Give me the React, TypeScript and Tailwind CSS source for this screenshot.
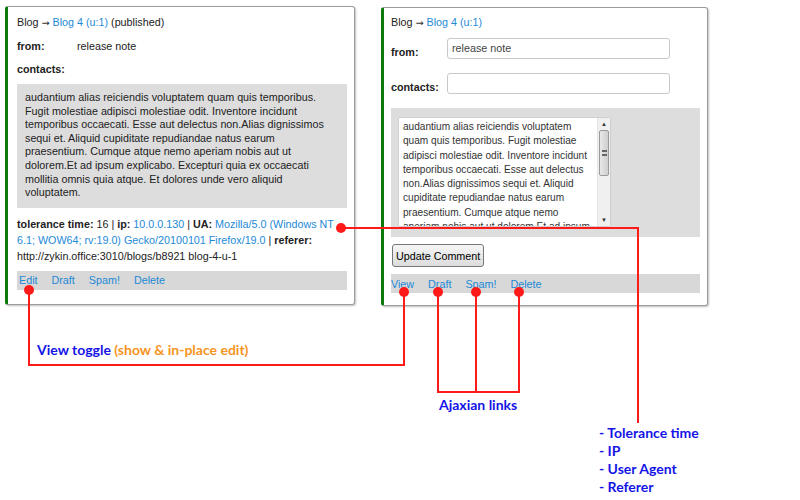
import React from "react";

const body = [
  "audantium alias reiciendis voluptatem quam quis temporibus.",
  "Fugit molestiae adipisci molestiae odit. Inventore incidunt",
  "temporibus occaecati. Esse aut delectus non.Alias dignissimos",
  "sequi et. Aliquid cupiditate repudiandae natus earum",
  "praesentium. Cumque atque nemo aperiam nobis aut ut",
  "dolorem.Et ad ipsum explicabo. Excepturi quia ex occaecati",
  "mollitia omnis quia atque. Et dolores unde vero aliquid",
  "voluptatem.",
];

const areaLines = [
  "audantium alias reiciendis voluptatem",
  "quam quis temporibus. Fugit molestiae",
  "adipisci molestiae odit. Inventore incidunt",
  "temporibus occaecati. Esse aut delectus",
  "non.Alias dignissimos sequi et. Aliquid",
  "cupiditate repudiandae natus earum",
  "praesentium. Cumque atque nemo",
  "aperiam nobis aut ut dolorem.Et ad ipsum",
];

const Link = ({ children }: { children: React.ReactNode }) => (
  <span className="text-[#1d8ad6]">{children}</span>
);

const Arrow = () => (
  <span className="font-['DejaVu_Sans',sans-serif] text-[9.5px] text-[#333]">→</span>
);

const Scrollbar = () => (
  <div className="w-[13px] flex flex-col bg-[#f0f0f0] border-l border-[#e4e4e4]">
    <div className="h-[12px] flex items-center justify-center text-[6px] text-[#333]">▲</div>
    <div className="mx-[1px] h-[46px] rounded-[2px] border border-[#9a9a9a] bg-gradient-to-r from-[#e8e8e8] to-[#cfcfcf] flex items-center justify-center">
      <div className="w-[5px] h-[6px] border-y-[2px] border-double border-[#666]" />
    </div>
    <div className="flex-1" />
    <div className="h-[12px] flex items-center justify-center text-[6px] text-[#333]">▼</div>
  </div>
);

const LinkBar = ({ items, pad }: { items: string[]; pad: string }) => (
  <div className={"h-[19px] bg-[#d8d8d8] flex items-center gap-[14px] " + pad}>
    {items.map((t) => (
      <Link key={t}>{t}</Link>
    ))}
  </div>
);

const ShowCard = () => (
  <div className="w-[350px] h-[299px] bg-white border border-[#9c9c9c] border-l-[3px] border-l-[#0b7a0b] rounded-[3px] shadow-[1px_1px_2px_rgba(0,0,0,0.25)] pl-[9px] pr-[7px] pt-[8px] leading-[14px] text-[#222]">
    <div>
      Blog <Arrow /> <Link>Blog 4 (u:1)</Link> (published)
    </div>
    <div className="flex mt-[9px]">
      <span className="font-bold w-[60px]">from:</span>
      <span>release note</span>
    </div>
    <div className="font-bold mt-[9px]">contacts:</div>
    <div className="mt-[8px] bg-[#dddddd] px-[8px] pt-[7px] pb-[8px] leading-[13.6px] whitespace-nowrap">
      {body.map((l) => (
        <div key={l}>{l}</div>
      ))}
    </div>
    <div className="mt-[8px] leading-[16px] whitespace-nowrap">
      <div>
        <b>tolerance time:</b> 16 | <b>ip:</b> <Link>10.0.0.130</Link> | <b>UA:</b>{" "}
        <Link>Mozilla/5.0 (Windows NT</Link>
      </div>
      <div>
        <Link>6.1; WOW64; rv:19.0) Gecko/20100101 Firefox/19.0</Link> | <b>referer:</b>
      </div>
      <div>http://zykin.office:3010/blogs/b8921 blog-4-u-1</div>
    </div>
    <div className="mt-[7px]">
      <LinkBar items={["Edit", "Draft", "Spam!", "Delete"]} pad="pl-[2px]" />
    </div>
  </div>
);

const EditCard = () => (
  <div className="w-[327px] h-[299px] mt-[1px] bg-white border border-[#9c9c9c] border-l-[3px] border-l-[#0b7a0b] rounded-[3px] shadow-[1px_1px_2px_rgba(0,0,0,0.25)] pl-[7px] pr-[7px] pt-[7px] leading-[14px] text-[#222]">
    <div>
      Blog <Arrow /> <Link>Blog 4 (u:1)</Link>
    </div>
    <div className="flex items-center mt-[8px]">
      <span className="font-bold w-[56px] pt-[6px]">from:</span>
      <div className="w-[223px] h-[21px] border border-[#c8c8c8] rounded-[3px] px-[4px] pt-[2px] text-[#444]">
        release note
      </div>
    </div>
    <div className="flex items-center mt-[14px]">
      <span className="font-bold w-[56px] pt-[6px]">contacts:</span>
      <div className="w-[223px] h-[21px] border border-[#c8c8c8] rounded-[3px]" />
    </div>
    <div className="mt-[14px] bg-[#dddddd] h-[129px] pl-[7px] pt-[9px]">
      <div className="w-[213px] h-[110px] bg-white border border-[#cfcfcf] rounded-[2px] flex overflow-hidden">
        <div className="flex-1 pl-[4px] pt-[2px] text-[10.1px] leading-[14.3px] whitespace-nowrap overflow-hidden text-[#333]">
          {areaLines.map((l) => (
            <div key={l}>{l}</div>
          ))}
        </div>
        <Scrollbar />
      </div>
    </div>
    <button className="mt-[7px] ml-[1px] h-[23px] px-[3px] border border-[#777] rounded-[3px] bg-gradient-to-b from-[#f6f6f6] to-[#dcdcdc] text-[10.75px] text-black font-['Liberation_Sans']">
      Update Comment
    </button>
    <div className="mt-[7px]">
      <LinkBar items={["View", "Draft", "Spam!", "Delete"]} pad="pl-0" />
    </div>
  </div>
);

export default function App() {
  return (
    <div className="relative w-[800px] h-[500px] bg-white overflow-hidden font-['Liberation_Sans',Arial,sans-serif] text-[10.75px]">
      <div className="flex pl-[5px] pt-[6px] gap-[26px]">
        <ShowCard />
        <EditCard />
      </div>

      <svg className="absolute inset-0" width="800" height="500" viewBox="0 0 800 500">
        <g stroke="#ff1a1a" strokeWidth="2" fill="none">
          <polyline points="29,290 29,365 404,365 404,292" />
          <polyline points="438,292 438,392 519,392 519,292" />
          <line x1="476" y1="292" x2="476" y2="392" />
          <polyline points="341,228 638,228 638,423" />
        </g>
        <g fill="#ff1a1a">
          <circle cx="29" cy="290" r="5" />
          <circle cx="404" cy="292" r="5" />
          <circle cx="438" cy="292" r="5" />
          <circle cx="476" cy="292" r="5" />
          <circle cx="519" cy="292" r="5" />
          <circle cx="341" cy="228" r="5" />
        </g>
      </svg>

      <div className="absolute left-[37px] top-[341px] font-['Lato',sans-serif] font-bold text-[14px] leading-[18px] whitespace-nowrap">
        <span className="text-[#1414e6]">View toggle</span>{" "}
        <span className="text-[#f7941d]">(show &amp; in-place edit)</span>
      </div>
      <div className="absolute left-[439px] top-[396px] font-['Lato',sans-serif] font-bold text-[14px] leading-[18px] text-[#1414e6]">
        Ajaxian links
      </div>
      <div className="absolute left-[599px] top-[424px] font-['Lato',sans-serif] font-bold text-[14px] leading-[18px] text-[#1414e6]">
        <div>- Tolerance time</div>
        <div>- IP</div>
        <div>- User Agent</div>
        <div>- Referer</div>
      </div>
    </div>
  );
}
